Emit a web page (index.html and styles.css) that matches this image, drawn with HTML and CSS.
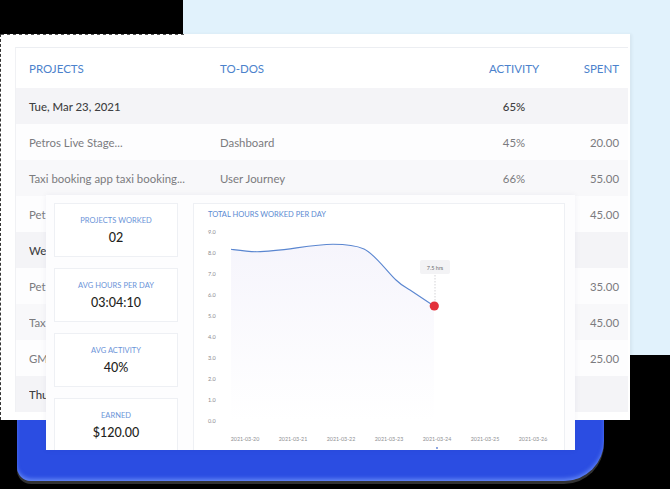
FILE: index.html
```html
<!DOCTYPE html>
<html>
<head>
<meta charset="utf-8">
<link rel="stylesheet" href="styles.css">
</head>
<body>
<div class="frame">
  <div class="table">
    <div class="row head"><span>PROJECTS</span><span>TO-DOS</span><span class="c">ACTIVITY</span><span class="r">SPENT</span></div>
    <div class="row date"><span>Tue, Mar 23, 2021</span><span></span><span class="c">65%</span><span class="r"></span></div>
    <div class="row"><span>Petros Live Stage...</span><span>Dashboard</span><span class="c">45%</span><span class="r">20.00</span></div>
    <div class="row alt"><span>Taxi booking app taxi booking...</span><span>User Journey</span><span class="c">66%</span><span class="r">55.00</span></div>
    <div class="row"><span class="cut">Pet</span><span></span><span></span><span class="r">45.00</span></div>
    <div class="row date"><span class="cut">We</span><span></span><span></span><span class="r"></span></div>
    <div class="row"><span class="cut">Pet</span><span></span><span></span><span class="r">35.00</span></div>
    <div class="row alt"><span class="cut">Tax</span><span></span><span></span><span class="r">45.00</span></div>
    <div class="row"><span class="cut">GM</span><span></span><span></span><span class="r">25.00</span></div>
    <div class="row date"><span class="cut">Thu</span><span></span><span></span><span class="r"></span></div>
  </div>
</div>
<div class="shadow"></div>

<div class="overlay">
  <div class="stats">
    <div class="stat"><div class="label">PROJECTS WORKED</div><div class="value">02</div></div>
    <div class="stat"><div class="label">AVG HOURS PER DAY</div><div class="value">03:04:10</div></div>
    <div class="stat"><div class="label">AVG ACTIVITY</div><div class="value">40%</div></div>
    <div class="stat"><div class="label">EARNED</div><div class="value">$120.00</div></div>
  </div>
  <div class="chart">
    <div class="chart-title">TOTAL HOURS WORKED PER DAY</div>
    <svg class="plot" width="370" height="240" viewBox="194 218 370 240">
      <defs>
        <linearGradient id="fill" x1="0" y1="0" x2="0" y2="1">
          <stop offset="0" stop-color="#f6f5fc"/>
          <stop offset="1" stop-color="#ffffff"/>
        </linearGradient>
      </defs>
      <g class="ylab">
        <text x="208" y="233">9.0</text>
        <text x="208" y="254">8.0</text>
        <text x="208" y="275">7.0</text>
        <text x="208" y="296">6.0</text>
        <text x="208" y="317">5.0</text>
        <text x="208" y="338">4.0</text>
        <text x="208" y="359">3.0</text>
        <text x="208" y="380">2.0</text>
        <text x="208" y="401">1.0</text>
        <text x="208" y="422">0.0</text>
      </g>
      <path d="M231,248.3 C240,249.5 248,250.7 257,250.7 C282,250.7 310,243.3 333,243.3 C346,243.3 356,244.5 364,248 C375,253 388,272 396,279 C401,284 405,286 410,289 L434,305 L434,420 L231,420 Z" fill="url(#fill)"/>
      <path d="M231,248.3 C240,249.5 248,250.7 257,250.7 C282,250.7 310,243.3 333,243.3 C346,243.3 356,244.5 364,248 C375,253 388,272 396,279 C401,284 405,286 410,289 L434,305" fill="none" stroke="#5a86d0" stroke-width="1.1"/>
      <line x1="435" y1="274" x2="435" y2="301" stroke="#c8c8cc" stroke-width="0.8" stroke-dasharray="1.5 1.5"/>
      <rect x="420" y="259" width="30" height="14" rx="2" fill="#f3f3f5"/>
      <text class="tip" x="435" y="268.5" text-anchor="middle">7.5 hrs</text>
      <circle cx="434.3" cy="305" r="4.6" fill="#e3313b"/>
      <g class="xlab">
        <text x="245" y="440">2021-03-20</text>
        <text x="293" y="440">2021-03-21</text>
        <text x="341" y="440">2021-03-22</text>
        <text x="389" y="440">2021-03-23</text>
        <text x="437" y="440">2021-03-24</text>
        <text x="485" y="440">2021-03-25</text>
        <text x="533" y="440">2021-03-26</text>
      </g>
      <circle cx="437" cy="447" r="0.9" fill="#5a7fd6"/>
    </svg>
  </div>
</div>
</body>
</html>
```

FILE: styles.css
```css
html, body {
  margin: 0;
  padding: 0;
}

body {
  width: 670px;
  height: 489px;
  overflow: hidden;
  position: relative;
  font-family: Lato, "Open Sans", sans-serif;
  background-color: #000;
  background-image: linear-gradient(#e1f2fc, #e1f2fc);
  background-repeat: no-repeat;
  background-position: 183px 0;
  background-size: 487px 355px;
}

.frame {
  margin-top: 34px;
  width: 630px;
  height: 386px;
  box-sizing: border-box;
  background-color: #fff;
  background-image: repeating-linear-gradient(90deg, #555 0 3px, transparent 3px 6px);
  background-repeat: no-repeat;
  background-size: 183px 1px;
  background-position: 0 0;
  border-left: 1px dashed #333;
  padding: 13px 0 0 14px;
  box-shadow: 2px 0 3px rgba(0, 0, 0, 0.05);
  overflow: hidden;
}

.table {
  width: 613px;
  box-sizing: border-box;
  border-top: 1px solid #eceef2;
  border-left: 1px solid #f0f1f4;
}

.row {
  display: grid;
  grid-template-columns: 191px 245px 98px 56px;
  height: 36px;
  align-items: center;
  padding: 0 9px 0 13px;
  font-size: 11.4px;
  color: #7b7b7e;
  white-space: nowrap;
  background: #fdfdfe;
}

.row.alt {
  background: #f8f8fa;
}

.row.head {
  height: 40px;
  background: #fff;
  color: #4c82cc;
  font-size: 11.5px;
}

.row.date {
  background: #f4f4f7;
  color: #3f3f42;
  font-weight: 500;
}

.cut {
  overflow: hidden;
}

.c {
  text-align: center;
}

.r {
  text-align: right;
}

.shadow {
  margin-left: 17px;
  width: 587px;
  height: 61px;
  background: #2b4de2;
  border-radius: 0 0 40px 14px;
  box-shadow: inset 0 -3px 4px -1px rgba(130, 165, 255, 0.7), 0 3px 0 #333;
}

.overlay {
  position: absolute;
  left: 46px;
  top: 195px;
  width: 529px;
  height: 255px;
  box-sizing: border-box;
  padding: 8px 10px 0 8px;
  background: #fdfdfe;
  display: flex;
  gap: 15px;
  overflow: hidden;
  box-shadow: 0 0 6px rgba(40, 40, 80, 0.06);
}

.stats {
  width: 124px;
  display: flex;
  flex-direction: column;
  gap: 11px;
  flex: none;
}

.stat {
  height: 54px;
  box-sizing: border-box;
  border: 1px solid #eef0f4;
  background: #fff;
  display: flex;
  flex-direction: column;
  align-items: center;
  justify-content: center;
  gap: 5px;
  flex: none;
}

.label {
  font-size: 7.5px;
  line-height: 9px;
  color: #6a93d8;
  letter-spacing: 0.05px;
}

.value {
  font-size: 12.5px;
  line-height: 15px;
  color: #1f1f22;
  font-weight: 500;
}

.chart {
  width: 372px;
  height: 270px;
  box-sizing: border-box;
  border: 1px solid #eef0f4;
  background: #fff;
  flex: none;
}

.chart-title {
  padding: 6px 0 0 14px;
  font-size: 7.5px;
  line-height: 9px;
  height: 9px;
  color: #5b8ad2;
}

.plot {
  display: block;
}

.ylab text {
  font-family: Lato, sans-serif;
  font-size: 5.5px;
  fill: #8a8a8e;
}

.xlab text {
  font-family: Lato, sans-serif;
  font-size: 5.3px;
  fill: #8e8e92;
  text-anchor: middle;
}

.tip {
  font-family: Lato, sans-serif;
  font-size: 5.5px;
  fill: #6a6a6e;
}
```
